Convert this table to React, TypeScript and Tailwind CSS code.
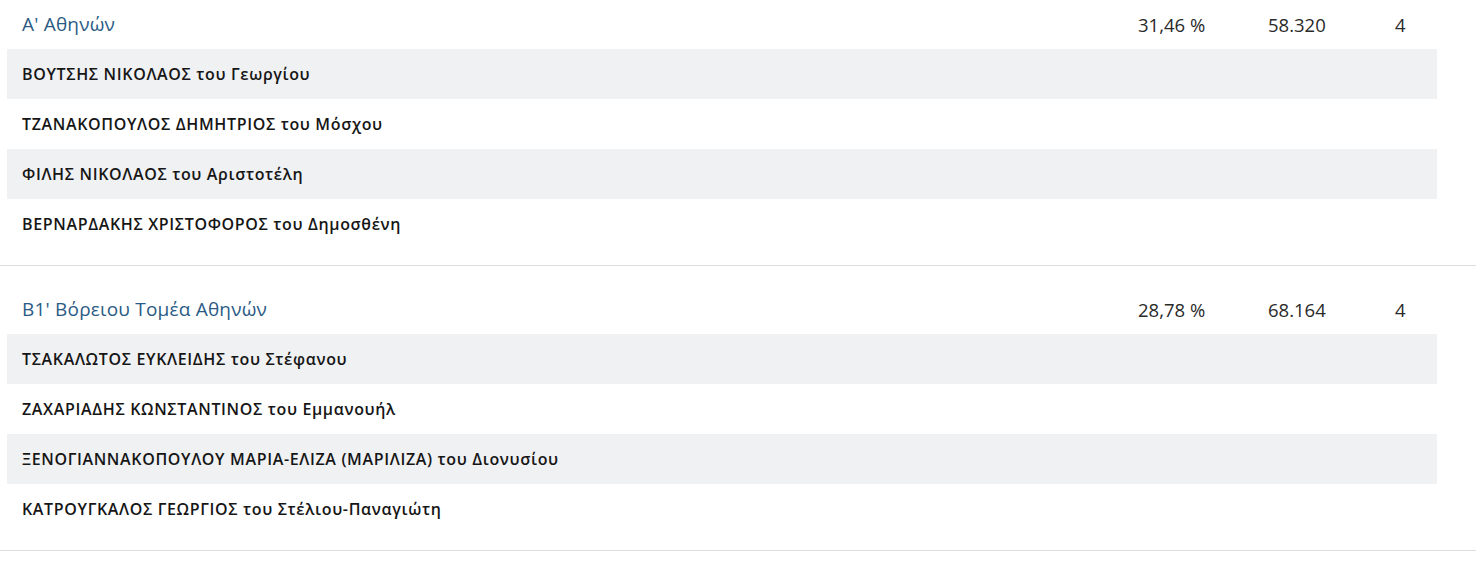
const districts = [
  {
    name: "Α' Αθηνών",
    percent: "31,46 %",
    votes: "58.320",
    seats: "4",
    candidates: [
      "ΒΟΥΤΣΗΣ ΝΙΚΟΛΑΟΣ του Γεωργίου",
      "ΤΖΑΝΑΚΟΠΟΥΛΟΣ ΔΗΜΗΤΡΙΟΣ του Μόσχου",
      "ΦΙΛΗΣ ΝΙΚΟΛΑΟΣ του Αριστοτέλη",
      "ΒΕΡΝΑΡΔΑΚΗΣ ΧΡΙΣΤΟΦΟΡΟΣ του Δημοσθένη",
    ],
  },
  {
    name: "Β1' Βόρειου Τομέα Αθηνών",
    percent: "28,78 %",
    votes: "68.164",
    seats: "4",
    candidates: [
      "ΤΣΑΚΑΛΩΤΟΣ ΕΥΚΛΕΙΔΗΣ του Στέφανου",
      "ΖΑΧΑΡΙΑΔΗΣ ΚΩΝΣΤΑΝΤΙΝΟΣ του Εμμανουήλ",
      "ΞΕΝΟΓΙΑΝΝΑΚΟΠΟΥΛΟΥ ΜΑΡΙΑ-ΕΛΙΖΑ (ΜΑΡΙΛΙΖΑ) του Διονυσίου",
      "ΚΑΤΡΟΥΓΚΑΛΟΣ ΓΕΩΡΓΙΟΣ του Στέλιου-Παναγιώτη",
    ],
  },
];

export default function App() {
  return (
    <div
      className="w-full min-h-screen bg-white"
      style={{ fontFamily: '"Open Sans", "Noto Sans", sans-serif' }}
    >
      {districts.map((d, i) => (
        <div
          key={d.name}
          className={`border-b border-[#dedede] pb-4 ${i === 0 ? "" : "pt-[19px]"}`}
        >
          <div className="ml-[7px] w-[1430px]">
            {/* District header */}
            <div className="flex h-[49px] items-center">
              <div className="flex-1 pl-[15px] text-[19px] tracking-[0.2px] text-[#2b5b84]">
                {d.name}
              </div>
              <div className="w-[130px] text-[18.5px] text-[#2a2a2a]">{d.percent}</div>
              <div className="w-[127px] text-[18.5px] text-[#2a2a2a]">{d.votes}</div>
              <div className="w-[42px] text-[18.5px] text-[#2a2a2a]">{d.seats}</div>
            </div>

            {/* Elected candidates */}
            {d.candidates.map((c, j) => (
              <div
                key={c}
                className={`flex h-[50px] items-center px-[15px] text-[16px] font-semibold tracking-[0.65px] text-[#161616] ${
                  j % 2 === 0 ? "bg-[#f0f1f3]" : "bg-white"
                }`}
              >
                {c}
              </div>
            ))}
          </div>
        </div>
      ))}
    </div>
  );
}
